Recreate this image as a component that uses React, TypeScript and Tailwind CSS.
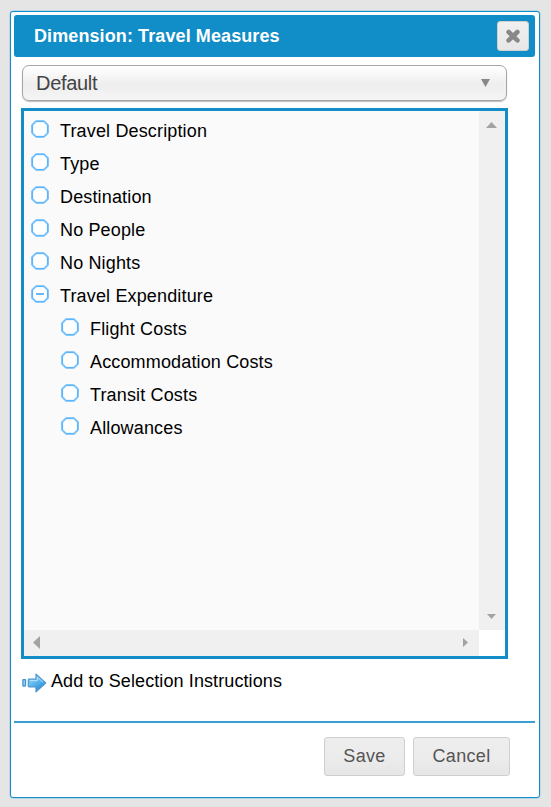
import React from "react";

type Item = { label: string; child?: boolean; open?: boolean };

const items: Item[] = [
  { label: "Travel Description" },
  { label: "Type" },
  { label: "Destination" },
  { label: "No People" },
  { label: "No Nights" },
  { label: "Travel Expenditure", open: true },
  { label: "Flight Costs", child: true },
  { label: "Accommodation Costs", child: true },
  { label: "Transit Costs", child: true },
  { label: "Allowances", child: true },
];

function Node({ open }: { open?: boolean }) {
  return (
    <svg width="18" height="18" viewBox="0 0 18 18" className="-mt-[5px] shrink-0" fill="none">
      <path d="M5 1.2H13L16.8 5V13L13 16.8H5L1.2 13V5Z" fill="#fff" stroke="#a5d6fb" strokeWidth="2" />
      <path d="M5 1.2H13M16.8 5V13M13 16.8H5M1.2 13V5" stroke="#5cb5fa" strokeWidth="1.6" />
      <path d="M5 1.2L1.2 5M13 1.2L16.8 5M16.8 13L13 16.8M5 16.8L1.2 13" stroke="#74c0fa" strokeWidth="1.4" />
      {open && <path d="M5 9H13" stroke="#5aaef0" strokeWidth="1.8" />}
    </svg>
  );
}

function ArrowIcon() {
  return (
    <svg width="25" height="20" viewBox="0 0 25 20" className="mt-px shrink-0">
      <defs>
        <linearGradient id="arrow" x1="0" y1="0" x2="0.6" y2="1">
          <stop offset="0" stopColor="#a8dcfa" />
          <stop offset="0.5" stopColor="#64b9f0" />
          <stop offset="1" stopColor="#238bd6" />
        </linearGradient>
      </defs>
      <rect x="0.9" y="6.7" width="2.6" height="6.4" rx="0.5" fill="#a3d7f7" stroke="#3f91cd" strokeWidth="1.3" />
      <path d="M7 6.2H14V1.2L23.7 10L14 18.8V13.8H7Q6.3 13.8 6.3 13.1V6.9Q6.3 6.2 7 6.2Z" fill="url(#arrow)" stroke="#4b97cf" strokeWidth="1.2" strokeLinejoin="round" />
      <path d="M8 7.6H15.3V4.2L21 9.2" fill="none" stroke="#c0e6fb" strokeWidth="0.9" />
    </svg>
  );
}

export default function App() {
  return (
    <div className="h-[807px] w-[551px] overflow-hidden bg-[#e5e5e5] pl-[10px] pt-[11px] font-['Liberation_Sans',Arial,sans-serif] text-black">
      <div className="flex h-[787px] w-[530px] flex-col rounded-[3px] border border-[#138dc8] bg-white px-[3px] pt-[3px] shadow-[0_0_0_0.4px_#8cc7e3]">
        <header className="flex h-[42px] w-[521px] shrink-0 items-center justify-between rounded-[3px] bg-[#118dc7] pl-5 pr-[6px]">
          <h1 className="text-[18px] font-bold tracking-[0.1px] text-white">Dimension: Travel Measures</h1>
          <button className="flex h-[30px] w-8 items-center justify-center rounded-[3px] border border-[#d0d0d0] bg-linear-to-b from-[#f0f0f0] to-[#e7e7e7]">
            <svg width="16" height="16" viewBox="0 0 16 16">
              <path d="M3.6 4L12.4 12.4M12.4 4L3.6 12.4" stroke="#888" strokeWidth="4.6" strokeLinecap="round" />
            </svg>
          </button>
        </header>

        <button className="ml-2 mt-2 flex h-[36px] w-[485px] shrink-0 items-center justify-between rounded-[7px] border border-[#a5a5a5] bg-linear-to-b from-white via-[#eeeeee] via-55% to-[#f5f5f5] pl-[13px] pr-[16px] text-[20px] text-[#444] shadow-[0_1px_1px_#bbb]">
          <span className="tracking-[-0.3px]">Default</span>
          <svg width="9" height="8" viewBox="0 0 9 8"><path d="M0 0H9L4.5 8Z" fill="#888" /></svg>
        </button>

        <main className="ml-[7px] mt-[7px] grid h-[551px] w-[487px] shrink-0 grid-cols-[1fr_26px] grid-rows-[1fr_26px] border-[3px] border-[#138dc8] bg-white">
          <ul className="bg-[#fafafa] pt-[4px]">
            {items.map((item) => (
              <li key={item.label} className={item.child ? "flex h-[33px] items-center gap-[11px] pl-[37px]" : "flex h-[33px] items-center gap-[11px] pl-[7px]"}>
                <Node open={item.open} />
                <span className="whitespace-nowrap text-[18px] tracking-[0.15px]">{item.label}</span>
              </li>
            ))}
          </ul>
          <div className="flex flex-col items-center justify-between bg-[#f0f0f0] pb-[11px] pr-px pt-[11px]">
            <svg width="11" height="6" viewBox="0 0 11 6"><path d="M0 6L5.5 0L11 6Z" fill="#a3a3a3" /></svg>
            <svg width="9" height="5" viewBox="0 0 9 5"><path d="M0 0H9L4.5 5Z" fill="#a3a3a3" /></svg>
          </div>
          <div className="flex items-center justify-between bg-[#f0f0f0] pb-px pl-[9px] pr-[11px]">
            <svg width="7" height="13" viewBox="0 0 7 13"><path d="M7 0V13L0 6.5Z" fill="#a3a3a3" /></svg>
            <svg width="5" height="9" viewBox="0 0 5 9"><path d="M0 0V9L5 4.5Z" fill="#a3a3a3" /></svg>
          </div>
        </main>

        <div className="ml-2 mt-[11px] flex h-6 shrink-0 items-center gap-1">
          <ArrowIcon />
          <span className="-mt-[2px] whitespace-nowrap text-[18px] tracking-[0.1px]">Add to Selection Instructions</span>
        </div>

        <footer className="mt-[27px] flex w-[521px] gap-2 border-t-2 border-[#389fd0] pl-[310px] pt-[14px] text-[18px] tracking-[0.35px] text-[#555]">
          <button className="h-[39px] w-[81px] rounded-[3px] border border-[#cfcfcf] bg-linear-to-b from-[#ededed] via-[#ececec] to-[#e6e6e6]">Save</button>
          <button className="h-[39px] w-[97px] rounded-[3px] border border-[#cfcfcf] bg-linear-to-b from-[#ededed] via-[#ececec] to-[#e6e6e6]">Cancel</button>
        </footer>
      </div>
    </div>
  );
}
